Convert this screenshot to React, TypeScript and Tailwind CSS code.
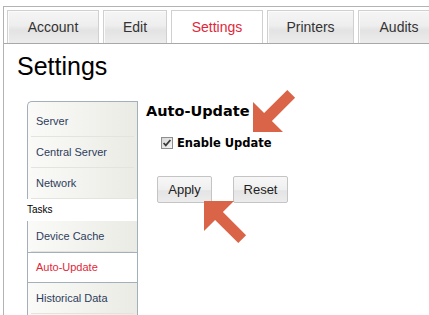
import React from 'react';

const tabs: [string, number][] = [['Account', 92], ['Edit', 64], ['Settings', 92], ['Printers', 87], ['Audits', 82]];

const Arrow = ({ up, className }: { up?: boolean; className: string }) => (
  <svg className={className} width="46" height="46" viewBox="0 0 46 46">
    <polygon
      fill="#da6447"
      points={up
        ? '0,2 0,32 11.1,20.9 34.3,44.1 42.1,36.3 18.9,13.1 30,2'
        : '0,44 0,14 11.1,25.1 34.3,1.9 42.1,9.7 18.9,32.9 30,44'}
    />
  </svg>
);

const Item = ({ label, active }: { label: string; active?: boolean }) =>
  active ? (
    <div className="h-[31px] border-y border-[#a3b0bb] bg-white pl-[8px] text-[11px] leading-[29px] text-[#e0283a]">{label}</div>
  ) : (
    <div className="flex h-[31px] flex-col">
      <div className="h-[30px] pl-[8px] text-[11px] leading-[30px] text-[#2d3d5c]">{label}</div>
      <div className="mx-[3px] h-px bg-[#e4e4df]" />
    </div>
  );

export default function App() {
  return (
    <div className="relative h-[315px] w-[429px] overflow-hidden bg-white font-['Liberation_Sans',Arial,sans-serif]">
      <div className="ml-[3px] mt-[6px] h-[309px] border-l border-t border-[#b3b3b3]">
        <div className="flex gap-[4px] border-b border-[#a8a8a8] pl-[3px] pt-[3px]">
          {tabs.map(([name, w]) => (
            <div
              key={name}
              style={{ width: w }}
              className={`h-[33px] shrink-0 border border-b-0 border-[#d0d0d0] text-center text-[14px] leading-[32px] ${
                name === 'Settings'
                  ? 'bg-white text-[#e0283a]'
                  : 'bg-[linear-gradient(#f5f5f5,#eeeeee_45%,#e3e3e3_60%,#ececec)] text-[#333] shadow-[inset_1px_1px_0_#fbfbfb]'
              }`}
            >
              {name}
            </div>
          ))}
        </div>

        <div className="pl-[13px] pt-[8px]">
          <h1 className="text-[25px] leading-[28px] text-black">Settings</h1>

          <div className="mt-[21px] flex">
            <div className="ml-[10px] flex h-[220px] w-[111px] shrink-0 flex-col border-r border-[#a3b0bb]">
              <div className="rounded-tl-[5px] border-l border-t border-[#a3b0bb] bg-[linear-gradient(to_right,#fafaf8,#ebebe5)] pt-[4px]">
                <Item label="Server" />
                <Item label="Central Server" />
                <Item label="Network" />
              </div>
              <div className="h-[22px] text-[10px] leading-[22px] text-black">Tasks</div>
              <div className="flex-1 border-l border-[#a3b0bb] bg-[linear-gradient(to_right,#fafaf8,#ebebe5)]">
                <Item label="Device Cache" />
                <Item label="Auto-Update" active />
                <Item label="Historical Data" />
              </div>
            </div>

            <div className="flex flex-col pl-[8px]">
              <h2 className="mt-[1px] font-['DejaVu_Sans',Verdana,sans-serif] text-[14.5px] font-bold leading-[18px] text-black">Auto-Update</h2>
              <label className="ml-[15px] mt-[15px] flex items-center gap-[4px]">
                <svg width="12" height="12" viewBox="0 0 12 12">
                  <defs>
                    <linearGradient id="cb" x1="0" y1="0" x2="1" y2="1">
                      <stop offset="0" stopColor="#d6d6d6" />
                      <stop offset="1" stopColor="#f6f6f6" />
                    </linearGradient>
                  </defs>
                  <rect x="0.5" y="0.5" width="11" height="11" fill="url(#cb)" stroke="#8e8e8e" />
                  <path d="M2.6 6 L4.8 8.4 L9.4 3" fill="none" stroke="#3a3a3a" strokeWidth="1.8" />
                </svg>
                <span className="font-['DejaVu_Sans',Verdana,sans-serif] text-[11.5px] font-bold leading-[16px] text-black">Enable Update</span>
              </label>
              <div className="ml-[11px] mt-[25px] flex gap-[21px]">
                {['Apply', 'Reset'].map(b => (
                  <button
                    key={b}
                    type="button"
                    className="h-[27px] w-[55px] rounded-[2px] border border-[#c4c4c4] bg-[linear-gradient(#f7f7f7,#efefef_50%,#e4e4e4_55%,#ececec)] text-[13px] text-[#222]"
                  >
                    {b}
                  </button>
                ))}
              </div>
            </div>
          </div>
        </div>
      </div>

      <Arrow className="absolute left-[253px] top-[88px]" />
      <Arrow up className="absolute left-[204px] top-[199px]" />
    </div>
  );
}
